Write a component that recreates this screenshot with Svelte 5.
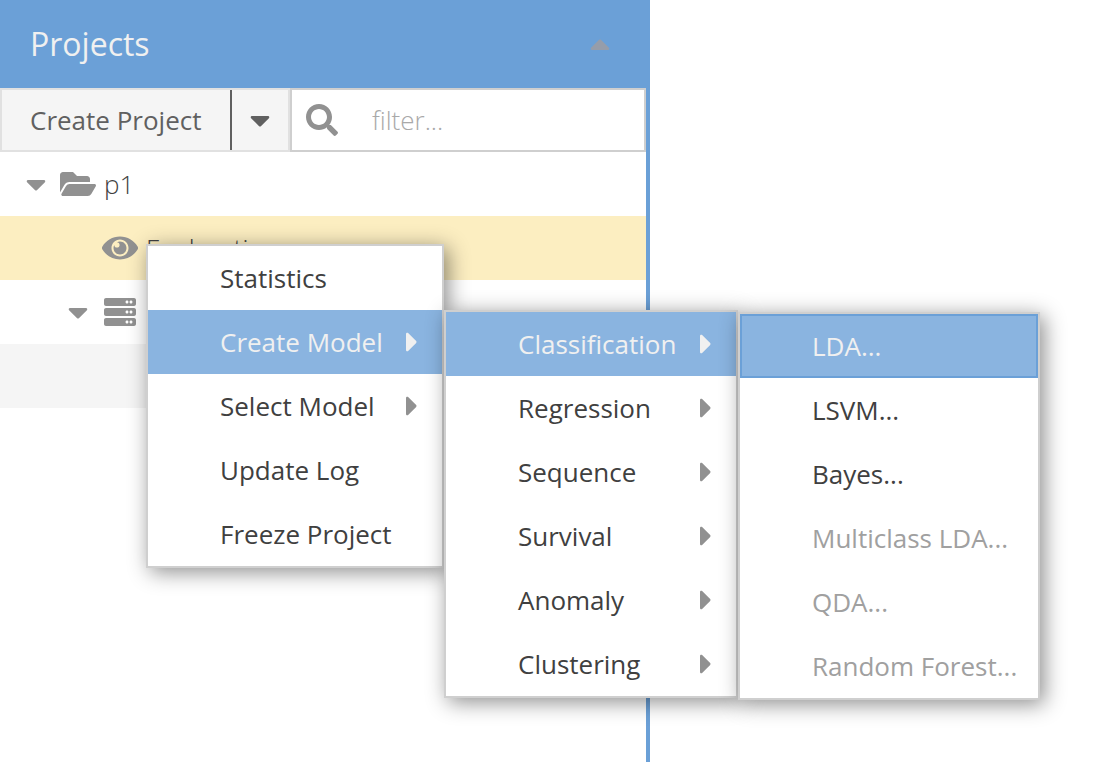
<script>
  const icons = {
    caretDown: { w: 320, d: 'M31.3 192h257.3c17.8 0 26.7 21.5 14.1 34.1L174.1 354.7c-7.8 7.8-20.5 7.8-28.3 0L17.2 226.1C4.6 213.5 13.5 192 31.3 192z' },
    caretUp: { w: 320, d: 'M288.662 352H31.338c-17.818 0-26.741-21.543-14.142-34.142l128.662-128.662c7.81-7.81 20.474-7.81 28.284 0l128.662 128.662c12.6 12.599 3.676 34.142-14.142 34.142z' },
    caretRight: { w: 192, d: 'M0 384.662V127.338c0-17.818 21.543-26.741 34.142-14.142l128.662 128.662c7.81 7.81 7.81 20.474 0 28.284L34.142 398.804C21.543 411.404 0 402.48 0 384.662z' },
    search: { w: 512, d: 'M505 442.7L405.3 343c-4.5-4.5-10.6-7-17-7H372c27.6-35.3 44-79.7 44-128C416 93.1 322.9 0 208 0S0 93.1 0 208s93.1 208 208 208c48.3 0 92.7-16.4 128-44v16.3c0 6.4 2.5 12.5 7 17l99.7 99.7c9.4 9.4 24.6 9.4 33.9 0l28.3-28.3c9.4-9.4 9.4-24.6.1-34zM208 336c-70.7 0-128-57.2-128-128 0-70.7 57.2-128 128-128 70.7 0 128 57.2 128 128 0 70.7-57.2 128-128 128z' },
    folder: { w: 576, d: 'M572.694 292.093L500.27 416.248A63.997 63.997 0 0 1 444.989 448H45.025c-18.523 0-30.064-20.093-20.731-36.093l72.424-124.155A64 64 0 0 1 152 256h399.964c18.523 0 30.064 20.093 20.73 36.093zM152 224h328v-48c0-26.51-21.49-48-48-48H272l-64-64H48C21.49 64 0 85.49 0 112v278.046l69.077-118.418C86.214 242.25 117.989 224 152 224z' },
    eye: { w: 576, d: 'M569.354 231.631C512.969 135.949 407.81 72 288 72 168.14 72 63.004 135.994 6.646 231.631a47.999 47.999 0 0 0 0 48.739C63.031 376.051 168.19 440 288 440c119.86 0 224.996-63.994 281.354-159.631a47.997 47.997 0 0 0 0-48.738zM288 392c-75.162 0-136-60.827-136-136 0-75.162 60.826-136 136-136 75.162 0 136 60.826 136 136 0 75.162-60.826 136-136 136zm104-136c0 57.438-46.562 104-104 104s-104-46.562-104-104c0-17.708 4.431-34.379 12.236-48.973l-.001.032c0 23.651 19.173 42.823 42.824 42.823s42.824-19.173 42.824-42.823c0-23.651-19.173-42.824-42.824-42.824l-.032.001C253.621 156.431 270.292 152 288 152c57.438 0 104 46.562 104 104z' },
    server: {
      w: 512,
      d: [32, 192, 352]
        .map((y) => `M480 ${y + 128}H32c-17.673 0-32-14.327-32-32V${y + 32}c0-17.673 14.327-32 32-32h448c17.673 0 32 14.327 32 32v64c0 17.673-14.327 32-32 32zm-48-88c-13.255 0-24 10.745-24 24s10.745 24 24 24 24-10.745 24-24-10.745-24-24-24zm-64 0c-13.255 0-24 10.745-24 24s10.745 24 24 24 24-10.745 24-24-10.745-24-24-24z`)
        .join('')
    }
  };

  const menu = [
    { label: 'Statistics' },
    {
      label: 'Create Model',
      active: true,
      items: [
        {
          label: 'Classification',
          active: true,
          items: [
            { label: 'LDA...', active: true, focused: true },
            { label: 'LSVM...' },
            { label: 'Bayes...' },
            { label: 'Multiclass LDA...', disabled: true },
            { label: 'QDA...', disabled: true },
            { label: 'Random Forest...', disabled: true }
          ]
        },
        { label: 'Regression', more: true },
        { label: 'Sequence', more: true },
        { label: 'Survival', more: true },
        { label: 'Anomaly', more: true },
        { label: 'Clustering', more: true }
      ]
    },
    { label: 'Select Model', more: true },
    { label: 'Update Log' },
    { label: 'Freeze Project' }
  ];
</script>

{#snippet icon(name)}
  <svg class="icon" width={icons[name].w / 16} height="32" viewBox="0 0 {icons[name].w} 512" aria-hidden="true">
    <path d={icons[name].d} />
  </svg>
{/snippet}

{#snippet menuList(items, level)}
  <ul class="menu level-{level}" role="menu">
    {#each items as item}
      <li role="none">
        <button
          type="button"
          role="menuitem"
          class="item"
          class:active={item.active}
          class:focused={item.focused}
          disabled={item.disabled}
        >
          <span>{item.label}</span>
          {#if item.items || item.more}{@render icon('caretRight')}{/if}
        </button>
        {#if item.items}{@render menuList(item.items, level + 1)}{/if}
      </li>
    {/each}
  </ul>
{/snippet}

<main>
  <section class="panel">
    <header>
      <h1>Projects</h1>
      <button type="button" class="collapse" aria-label="Collapse">{@render icon('caretUp')}</button>
    </header>
    <div class="content">
      <div class="toolbar">
        <div class="split">
          <button type="button" class="create">Create Project</button>
          <button type="button" class="drop" aria-label="More actions">{@render icon('caretDown')}</button>
        </div>
        <label class="filter">
          {@render icon('search')}
          <input type="text" placeholder="filter..." aria-label="Filter" />
        </label>
      </div>
      <ul class="tree" role="tree">
        <li class="row" role="treeitem" aria-selected="false" aria-expanded="true">
          {@render icon('caretDown')}
          <span class="kind">{@render icon('folder')}</span>
          <span>p1</span>
        </li>
        <li class="row leaf selected" role="treeitem" aria-selected="true">
          <span class="kind">{@render icon('eye')}</span>
          <span>Exploration</span>
        </li>
        <li class="row nested" role="treeitem" aria-selected="false" aria-expanded="true">
          {@render icon('caretDown')}
          <span class="kind">{@render icon('server')}</span>
        </li>
        <li class="row striped" role="treeitem" aria-selected="false"></li>
      </ul>
    </div>
  </section>
  {@render menuList(menu, 1)}
</main>

<style>
  :global(body) {
    margin: 0;
    background: #fff;
  }

  main {
    position: relative;
    display: flex;
    min-height: 100vh;
    font: 400 26px/36px 'Open Sans', sans-serif;
    color: #404040;
  }

  button,
  input {
    margin: 0;
    padding: 0;
    border: 0;
    background: none;
    font: inherit;
    color: inherit;
  }

  ul {
    margin: 0;
    padding: 0;
    list-style: none;
  }

  .icon {
    display: block;
    flex: none;
    fill: #919191;
  }

  .panel {
    display: flex;
    flex-direction: column;
    flex: 0 1 650px;
    min-width: 0;
  }

  header {
    display: flex;
    align-items: center;
    justify-content: space-between;
    height: 88px;
    padding: 0 40px 0 30px;
    background: #6ba0d7;
  }

  h1 {
    margin: 0;
    font-size: 32px;
    line-height: 44px;
    font-weight: 400;
    color: #f0f0f0;
  }

  .collapse .icon {
    fill: #969daa;
  }

  .content {
    flex: 1;
    border-right: 4px solid #6ba0d7;
  }

  .toolbar {
    display: flex;
    height: 64px;
  }

  .split {
    display: flex;
    border: 2px solid #e1e1e1;
    background: #f5f5f5;
    color: #606060;
  }

  .create {
    box-sizing: border-box;
    min-width: 230px;
    padding: 0 28px;
    border-right: 2px solid #606060;
    white-space: nowrap;
    text-align: left;
  }

  .drop {
    padding: 0 18px;
  }

  .drop .icon {
    fill: #606060;
  }

  .filter {
    display: flex;
    flex: 1;
    align-items: center;
    gap: 34px;
    min-width: 0;
    padding-left: 14px;
    border: 2px solid #cfcfcf;
  }

  .filter input {
    flex: 1;
    width: 0;
    min-width: 0;
    outline: none;
    font-weight: 300;
  }

  .filter input::placeholder {
    color: #a9a9a9;
    opacity: 1;
  }

  .row {
    display: flex;
    align-items: center;
    height: 64px;
    padding-left: 26px;
    font-weight: 300;
  }

  .row.nested {
    padding-left: 68px;
  }

  .row.leaf {
    padding-left: 88px;
  }

  .row.selected {
    background: #fceec1;
  }

  .row.striped {
    background: #f5f5f5;
  }

  .kind {
    display: flex;
    justify-content: center;
    width: 36px;
    margin: 0 8px 0 14px;
  }

  .menu {
    position: absolute;
    z-index: 1;
    border: 2px solid #cfcfcf;
    background: #fff;
    box-shadow: 4px 4px 20px rgba(0, 0, 0, 0.45);
  }

  .menu.level-1 {
    top: 244px;
    left: 146px;
  }

  .menu.level-2,
  .menu.level-3 {
    top: 0;
    left: calc(100% + 2px);
  }

  .menu li {
    position: relative;
  }

  .item {
    display: flex;
    align-items: center;
    justify-content: space-between;
    gap: 20px;
    box-sizing: border-box;
    width: 100%;
    height: 64px;
    padding: 0 24px 0 72px;
    white-space: nowrap;
  }

  .level-1 > li > .item {
    min-width: 294px;
  }

  .level-2 > li > .item {
    min-width: 290px;
  }

  .level-3 > li > .item {
    min-width: 298px;
    padding-right: 16px;
  }

  .item:disabled {
    color: #a0a0a0;
  }

  .item.active {
    background: #8ab4e0;
    color: #f0f0f0;
  }

  .item.active .icon {
    fill: #f0f0f0;
  }

  .item.focused {
    box-shadow: inset 0 0 0 2px #6ba0d7;
  }
</style>
